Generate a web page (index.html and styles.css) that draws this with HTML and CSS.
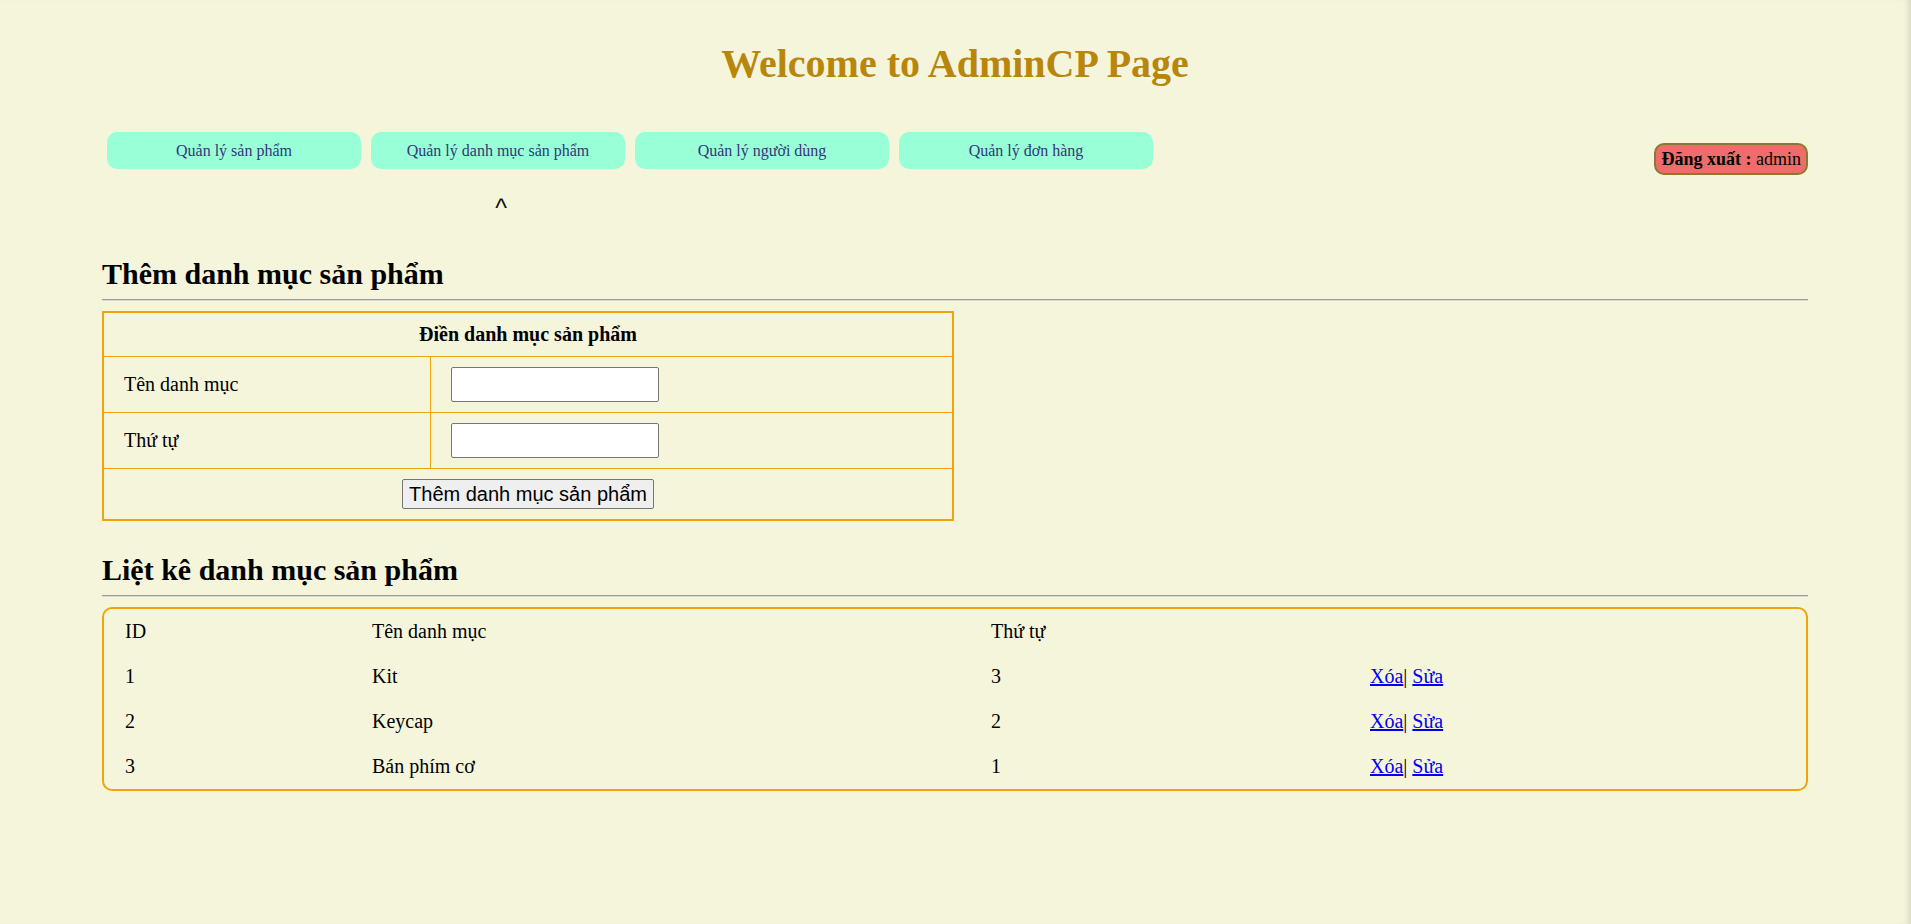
FILE: index.html
```html
<!DOCTYPE html>
<html lang="vi">
<head>
<meta charset="utf-8">
<title>AdminCP</title>
<link rel="stylesheet" href="styles.css">
</head>
<body>
<div class="page">
  <h1 class="title">Welcome to AdminCP Page</h1>

  <div class="topbar">
    <ul class="nav">
      <li class="nav-item"><a class="nav-link" href="#">Quản lý sản phẩm</a></li>
      <li class="nav-item active"><a class="nav-link" href="#">Quản lý danh mục sản phẩm</a></li>
      <li class="nav-item"><a class="nav-link" href="#">Quản lý người dùng</a></li>
      <li class="nav-item"><a class="nav-link" href="#">Quản lý đơn hàng</a></li>
    </ul>
    <a class="logout" href="#"><b>Đăng xuất :</b> admin</a>
  </div>

  <h2 class="section-title first">Thêm danh mục sản phẩm</h2>
  <hr class="rule">
  <form class="add-form" action="#">
    <table class="form-table">
      <tr>
        <th class="form-head" colspan="2">Điền danh mục sản phẩm</th>
      </tr>
      <tr>
        <td class="form-label">Tên danh mục</td>
        <td class="form-field"><input class="text-input" type="text" name="tendanhmuc"></td>
      </tr>
      <tr>
        <td class="form-label">Thứ tự</td>
        <td class="form-field"><input class="text-input" type="text" name="thutu"></td>
      </tr>
      <tr>
        <td class="form-submit" colspan="2"><button class="submit-btn" type="button">Thêm danh mục sản phẩm</button></td>
      </tr>
    </table>
  </form>

  <h2 class="section-title second">Liệt kê danh mục sản phẩm</h2>
  <hr class="rule">
  <table class="list-table">
    <colgroup>
      <col class="col-id">
      <col class="col-name">
      <col class="col-order">
      <col class="col-actions">
    </colgroup>
    <tr>
      <td>ID</td>
      <td>Tên danh mục</td>
      <td>Thứ tự</td>
      <td></td>
    </tr>
    <tr>
      <td>1</td>
      <td>Kit</td>
      <td>3</td>
      <td><a class="action" href="#">Xóa</a>| <a class="action" href="#">Sửa</a></td>
    </tr>
    <tr>
      <td>2</td>
      <td>Keycap</td>
      <td>2</td>
      <td><a class="action" href="#">Xóa</a>| <a class="action" href="#">Sửa</a></td>
    </tr>
    <tr>
      <td>3</td>
      <td>Bán phím cơ</td>
      <td>1</td>
      <td><a class="action" href="#">Xóa</a>| <a class="action" href="#">Sửa</a></td>
    </tr>
  </table>
</div>
</body>
</html>
```

FILE: styles.css
```css
html {
  background: #f5f5dc;
  min-height: 100%;
  box-shadow: inset -6px 0 6px -4px rgba(0, 0, 0, 0.14);
}

body {
  margin: 0;
  font-family: "Liberation Serif", "Times New Roman", serif;
  color: #000;
}

.page {
  padding: 0 103px 0 102px;
}

.title {
  margin: 0;
  padding-top: 41px;
  font-size: 40px;
  line-height: 45px;
  font-weight: bold;
  color: #b8860b;
  text-align: center;
}

.topbar {
  margin-top: 46px;
  display: flex;
  justify-content: space-between;
  align-items: flex-start;
}

.nav {
  display: flex;
  gap: 10px;
  margin: 0;
  padding: 0 0 0 5px;
  list-style: none;
}

.nav-item {
  position: relative;
}

.nav-link {
  display: block;
  width: 254px;
  height: 37px;
  line-height: 37px;
  text-align: center;
  background: #98ffd6;
  border-radius: 10px;
  color: #35357a;
  font-size: 16px;
  text-decoration: none;
}

.nav-item.active::after {
  content: "^";
  position: absolute;
  left: 0;
  right: 0;
  top: 100%;
  margin-top: 27px;
  padding-left: 6px;
  text-align: center;
  font-family: "Liberation Sans", Arial, sans-serif;
  font-size: 25px;
  line-height: 24px;
  color: #111;
}

.logout {
  margin-top: 11px;
  padding: 3px 5px;
  border: 2px solid #8a7a2e;
  border-radius: 10px;
  background: #f06c6c;
  color: #000;
  font-size: 18px;
  line-height: 22px;
  text-decoration: none;
  white-space: nowrap;
}

.section-title {
  margin: 0;
  font-size: 30px;
  line-height: 35px;
  font-weight: bold;
}

.section-title.first {
  margin-top: 81px;
}

.section-title.second {
  margin-top: 31px;
}

.rule {
  margin: 8px 0 10px;
  height: 0;
  border: 0;
  border-top: 1px solid #9a9a9a;
  border-bottom: 1px solid #d8d8d0;
}

.add-form {
  margin: 0;
}

.form-table {
  width: 852px;
  border: 2px solid #f0a30a;
  border-spacing: 0;
  font-size: 20px;
  line-height: 23px;
}

.form-table th,
.form-table td {
  padding: 10px 20px;
  border-bottom: 1px solid #f0a30a;
  vertical-align: middle;
}

.form-table tr:last-child td {
  border-bottom: 0;
}

.form-head {
  font-weight: bold;
  text-align: center;
}

.form-label {
  width: 286px;
  border-right: 1px solid #f0a30a;
  text-align: left;
}

.form-field {
  text-align: left;
}

.text-input {
  display: block;
  box-sizing: border-box;
  width: 208px;
  height: 35px;
  border: 1px solid #767676;
  border-radius: 2px;
  background: #fff;
}

.form-submit {
  text-align: center;
}

.submit-btn {
  height: 30px;
  padding: 1px 6px;
  border: 1px solid #767676;
  border-radius: 2px;
  background: #efefef;
  font-family: "Liberation Sans", Arial, sans-serif;
  font-size: 20px;
  line-height: 23px;
  color: #000;
  vertical-align: middle;
}

.list-table {
  width: 100%;
  table-layout: fixed;
  border: 2px solid #f0a30a;
  border-radius: 10px;
  border-spacing: 0;
  font-size: 20px;
  line-height: 23px;
}

.list-table td {
  padding: 11px 20px 11px 21px;
  text-align: left;
}

.col-id { width: 247px; }
.col-name { width: 619px; }
.col-order { width: 379px; }

.action {
  color: #0000ee;
  text-decoration: underline;
}
```
